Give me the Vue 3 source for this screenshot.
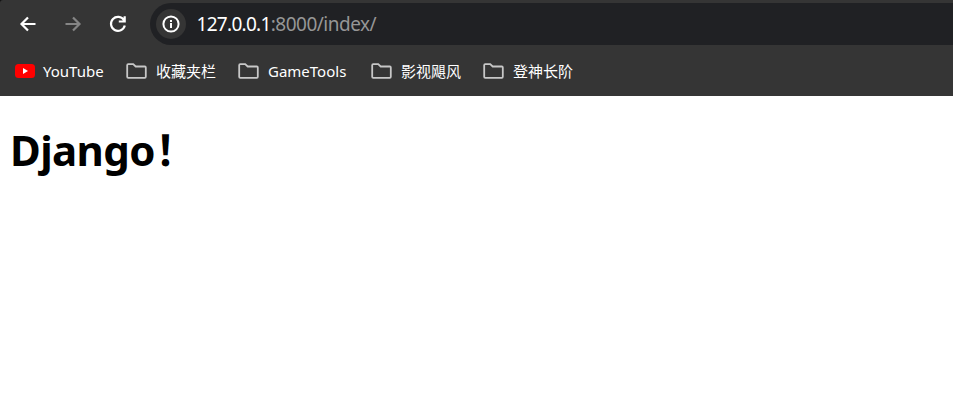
<script setup>
const bookmarks = [
  { name: 'YouTube', kind: 'video', width: 61 },
  { name: '收藏夹栏', kind: 'folder', width: 60 },
  { name: 'GameTools', kind: 'folder', width: 81 },
  { name: '影视飓风', kind: 'folder', width: 60 },
  { name: '登神长阶', kind: 'folder', width: 60 },
]
</script>

<template>
  <div class="window">
    <header class="chrome">
      <div class="toolbar">
        <nav class="controls">
          <svg class="nav-icon" viewBox="0 0 18 18"><path d="M16.5 9H3M9 2.5 2.5 9 9 15.5" /></svg>
          <svg class="nav-icon disabled" viewBox="0 0 18 18"><path d="M1.5 9H15M9 2.5 15.5 9 9 15.5" /></svg>
          <svg class="nav-icon" viewBox="0 0 18 18"><path d="M15 5.2A7 7 0 1 0 15.8 10.5M15.7 1.2V6.5H9.8" /></svg>
        </nav>
        <div class="address">
          <span class="site-info">
            <svg viewBox="0 0 18 18"><circle cx="9" cy="9" r="7.6" /><path d="M9 8v5M9 5v2" /></svg>
          </span>
          <span class="url"><span class="host">127.0.0.1</span><span class="path">:8000/index/</span></span>
        </div>
      </div>
      <div class="bookmarks">
        <div v-for="item in bookmarks" :key="item.name" class="bookmark">
          <svg v-if="item.kind === 'video'" class="video" viewBox="0 0 20 14">
            <rect width="20" height="14" rx="3.5" fill="#f00" /><path d="M8 4v6l5-3z" fill="#fff" />
          </svg>
          <svg v-else class="folder" viewBox="0 0 21 16">
            <path d="M1.2 2.2Q1.2 1.2 2.2 1.2H7.2L9.7 3.5H18.8Q19.8 3.5 19.8 4.5V13.8Q19.8 14.8 18.8 14.8H2.2Q1.2 14.8 1.2 13.8Z" />
          </svg>
          <span class="label" :style="{ width: item.width + 'px' }">{{ item.name }}</span>
        </div>
      </div>
    </header>
    <main><h1>Django<span class="mark">！</span></h1></main>
  </div>
</template>

<style>
body { background: #fff; }
</style>

<style scoped>
.window { height: 414px; overflow: hidden; background: #fff; font-family: "Noto Sans", "Noto Sans CJK SC", sans-serif; }
.chrome { height: 96px; background: #353535; border-top-left-radius: 3px; box-shadow: -3px -3px 0 3px #111; }
.toolbar { display: flex; height: 48px; padding-top: 3px; box-sizing: border-box; }
.controls { display: flex; width: 150px; height: 42px; box-sizing: border-box; padding-left: 18.5px; gap: 27px; align-items: center; }
.nav-icon { width: 18px; height: 18px; fill: none; stroke: #fff; stroke-width: 2.2; }
.disabled { stroke: #858585; }
.address { display: flex; align-items: center; flex: 1; height: 42px; background: #202124; border-radius: 21px 0 0 21px; }
.site-info { display: flex; align-items: center; justify-content: center; width: 30px; height: 30px; margin-left: 6px; background: #353535; border-radius: 50%; }
.site-info svg { width: 18px; height: 18px; fill: none; stroke: #fff; stroke-width: 2; }
.url { margin-left: 10.5px; font-size: 19px; line-height: 30px; white-space: nowrap; }
.host { color: #fff; letter-spacing: -.7px; }
.path { color: #969696; letter-spacing: -.5px; }
.bookmarks { display: flex; align-items: center; height: 46px; padding-left: 15px; gap: 22px; }
.bookmark { display: flex; align-items: center; }
.video { width: 20px; height: 14px; margin-right: 8px; }
.folder { width: 21px; height: 16px; margin-right: 9px; fill: none; stroke: #c7c7c7; stroke-width: 1.8; }
.label { color: #fff; font-size: 15px; line-height: 22px; white-space: nowrap; }
h1 { margin: 23px 0 0 10px; color: #000; font-size: 42px; line-height: 58px; font-weight: 700; letter-spacing: -.6px; white-space: nowrap; }
.mark { font-family: "Noto Sans CJK SC", sans-serif; }
</style>
